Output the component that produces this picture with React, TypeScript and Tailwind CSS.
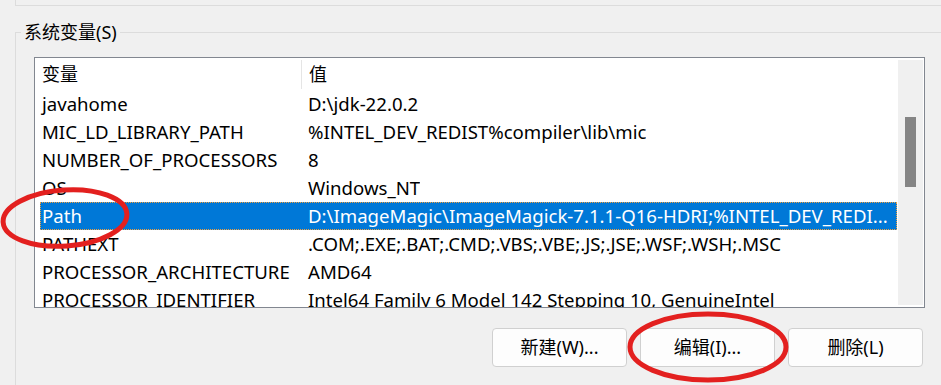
import React from "react";

type Row = { name: string; value: string; selected?: boolean };

const ROWS: Row[] = [
  { name: "javahome", value: "D:\\jdk-22.0.2" },
  { name: "MIC_LD_LIBRARY_PATH", value: "%INTEL_DEV_REDIST%compiler\\lib\\mic" },
  { name: "NUMBER_OF_PROCESSORS", value: "8" },
  { name: "OS", value: "Windows_NT" },
  {
    name: "Path",
    value: "D:\\ImageMagic\\ImageMagick-7.1.1-Q16-HDRI;%INTEL_DEV_REDI...",
    selected: true,
  },
  { name: "PATHEXT", value: ".COM;.EXE;.BAT;.CMD;.VBS;.VBE;.JS;.JSE;.WSF;.WSH;.MSC" },
  { name: "PROCESSOR_ARCHITECTURE", value: "AMD64" },
  { name: "PROCESSOR_IDENTIFIER", value: "Intel64 Family 6 Model 142 Stepping 10, GenuineIntel" },
];

function Button({ label }: { label: string }) {
  return (
    <button className="flex h-[39px] w-[135px] items-center justify-center rounded-[4px] border border-[#d0d0d0] bg-[#fdfdfd] text-[18px] text-black">
      {label}
    </button>
  );
}

export default function App() {
  return (
    <div className="relative h-[385px] w-[941px] overflow-hidden bg-[#f0f0f0] font-['Noto_Sans','Noto_Sans_CJK_SC',sans-serif] text-[18.6px] text-black">
      {/* bottom of the previous group box */}
      <div className="ml-[15px] h-[6px] border-b border-l border-[#dcdcdc]" />

      {/* 系统变量 group box */}
      <div className="relative ml-[15px] mt-[26px] h-[360px] border-l border-t border-[#dcdcdc]">
        <div className="absolute -top-[14px] left-[5px] bg-[#f0f0f0] px-[3px] text-[18px] leading-[26px]">
          系统变量(S)
        </div>

        <div className="pl-[18px] pt-[24px]">
          <div className="flex h-[251px] w-[891px] border border-[#828790] bg-white">
            <div className="flex min-w-0 flex-1 flex-col overflow-hidden">
              {/* header */}
              <div className="flex h-[32px] shrink-0 text-[18px]">
                <div className="flex w-[266px] items-center pl-[7px]">变量</div>
                <div className="mt-[2px] h-[29px] w-px bg-[#e5e5e5]" />
                <div className="flex flex-1 items-center pl-[7px]">值</div>
              </div>

              {/* rows */}
              {ROWS.map((r) => (
                <div
                  key={r.name}
                  className={
                    r.selected
                      ? "ml-[5px] flex h-[28px] shrink-0 items-center border border-dotted border-[#f0a040] bg-[#0078d7] text-white"
                      : "ml-[5px] flex h-[28px] shrink-0 items-center border border-transparent"
                  }
                >
                  <div className="w-[260px] shrink-0 whitespace-nowrap pl-[1px]">{r.name}</div>
                  <div className="overflow-hidden whitespace-nowrap pl-[7px]">{r.value}</div>
                </div>
              ))}
            </div>

            {/* scrollbar */}
            <div className="w-[27px] shrink-0 py-[2px] pl-px pr-px">
              <div className="h-full bg-[#f0f0f0] pl-[7px] pt-[57px]">
                <div className="h-[70px] w-[11px] bg-[#858585]" />
              </div>
            </div>
          </div>

          <div className="mt-[20px] flex w-[891px] justify-end gap-[13px] pr-[2px]">
            <Button label="新建(W)..." />
            <Button label="编辑(I)..." />
            <Button label="删除(L)" />
          </div>
        </div>
      </div>

      {/* red annotation marks */}
      <svg className="pointer-events-none absolute inset-0" width="941" height="385">
        <ellipse
          cx="65"
          cy="218"
          rx="62"
          ry="28"
          fill="none"
          stroke="#e3201f"
          strokeWidth="5"
          transform="rotate(-4 65 218)"
        />
        <ellipse
          cx="708"
          cy="347"
          rx="78"
          ry="33"
          fill="none"
          stroke="#e3201f"
          strokeWidth="5"
        />
      </svg>
    </div>
  );
}
